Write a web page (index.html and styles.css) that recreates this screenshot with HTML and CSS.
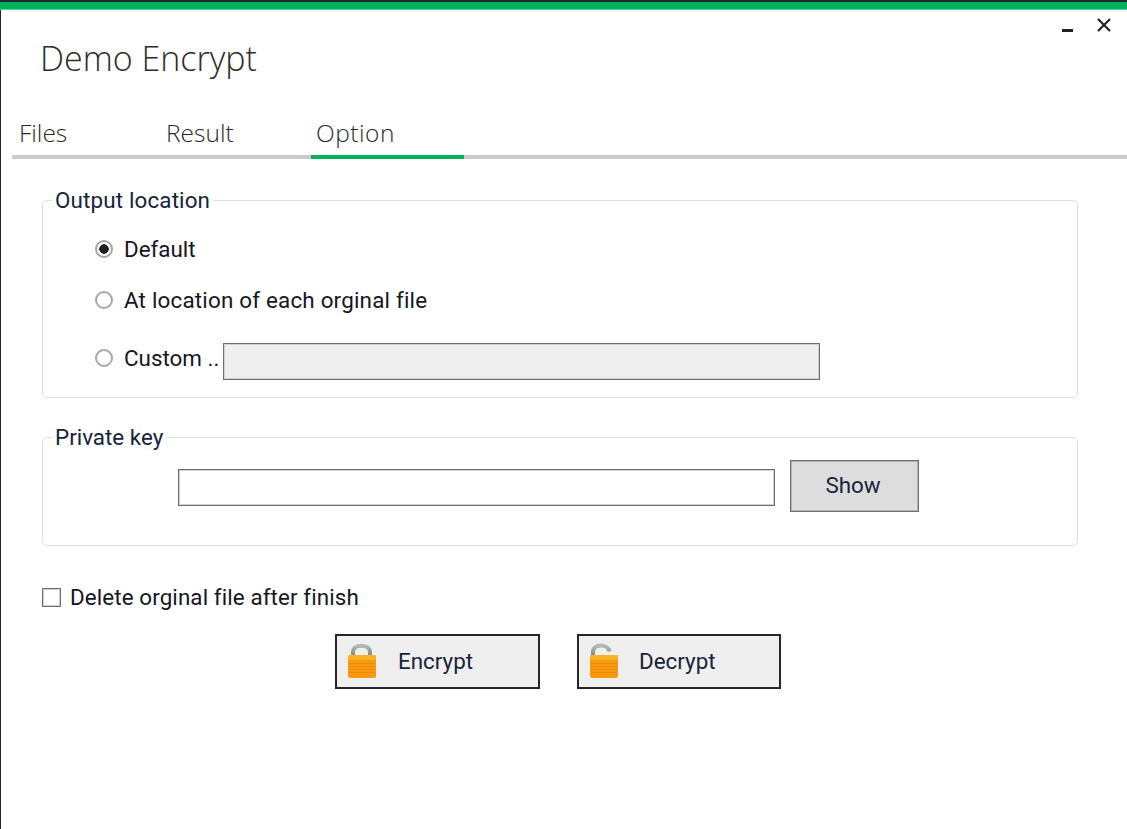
FILE: index.html
```html
<!DOCTYPE html>
<html lang="en">
<head>
<meta charset="utf-8">
<title>Demo Encrypt</title>
<link rel="stylesheet" href="styles.css">
</head>
<body>
<div class="window">
  <div class="topbar"></div>
  <div class="winctrl">
    <svg class="ctl-min" width="12" height="4" viewBox="0 0 12 4"><rect y="0" width="11" height="3" fill="#222"/></svg>
    <svg class="ctl-close" width="16" height="16" viewBox="0 0 16 16"><path d="M2 2 L14 14 M14 2 L2 14" stroke="#222" stroke-width="2.2" fill="none"/></svg>
  </div>
  <h1 class="title">Demo Encrypt</h1>
  <nav class="tabs">
    <span class="tab tab-files">Files</span>
    <span class="tab tab-result">Result</span>
    <span class="tab tab-option active">Option</span>
  </nav>
  <main class="content">
    <fieldset class="group group-output">
      <legend>Output location</legend>
      <div class="group-body body-output">
        <div class="row"><span class="radio checked"></span><span class="label">Default</span></div>
        <div class="row row-second"><span class="radio"></span><span class="label label-wide">At location of each orginal file</span></div>
        <div class="row row-custom"><span class="radio"></span><span class="label label-custom">Custom ..</span><input class="field field-disabled" type="text" disabled></div>
      </div>
    </fieldset>
    <fieldset class="group group-key">
      <legend>Private key</legend>
      <div class="group-body body-key">
        <div class="keyrow"><input class="field field-key" type="text"><button class="show" type="button">Show</button></div>
      </div>
    </fieldset>
    <div class="check-row"><span class="checkbox"></span><span class="label label-delete">Delete orginal file after finish</span></div>
    <div class="actions">
      <button class="action" type="button">
        <svg class="lock" width="34" height="38" viewBox="0 0 34 38">
          <defs><linearGradient id="sh1" x1="0" y1="0" x2="0" y2="1"><stop offset="0" stop-color="#b4b9b6"/><stop offset="1" stop-color="#7d8786"/></linearGradient></defs>
          <path d="M8 14 V10 C8 1.5 25 1.5 25 10 V14" fill="none" stroke="url(#sh1)" stroke-width="4"/>
          <rect x="3" y="13" width="28" height="23" rx="2" fill="#f79a0c"/>
          <rect x="3" y="13" width="28" height="5" rx="1.5" fill="#fbb321"/>
          <path d="M4 21.5 H30 M4 24.5 H30 M4 27.5 H30 M4 30.5 H30" stroke="#ec8a14" stroke-width="1.2"/>
        </svg>
        <span>Encrypt</span>
      </button>
      <button class="action action-decrypt" type="button">
        <svg class="lock" width="34" height="38" viewBox="0 0 34 38">
          <defs><linearGradient id="sh2" x1="0" y1="0" x2="0" y2="1"><stop offset="0" stop-color="#b4b9b6"/><stop offset="1" stop-color="#7d8786"/></linearGradient></defs>
          <path d="M6 14 V10 C6 1.5 21 1.5 22.500 9.500" fill="none" stroke="url(#sh2)" stroke-width="4"/>
          <rect x="3" y="13" width="28" height="23" rx="2" fill="#f79a0c"/>
          <rect x="3" y="13" width="28" height="5" rx="1.5" fill="#fbb321"/>
          <path d="M4 21.5 H30 M4 24.5 H30 M4 27.5 H30 M4 30.5 H30" stroke="#ec8a14" stroke-width="1.2"/>
        </svg>
        <span>Decrypt</span>
      </button>
    </div>
  </main>
</div>
</body>
</html>
```
FILE: styles.css
```css
* { box-sizing: border-box; }
html, body { margin: 0; height: 100%; background: #fff; }
body { overflow: hidden; font-family: Roboto, "Liberation Sans", sans-serif; color: #1f1f1f; }
.window { position: relative; height: 829px; border-left: 1px solid #1c2430; background: #fff; }
.topbar { height: 10px; border-top: 2px solid #24282b; background: #00b15c; border-bottom: 1px solid #4fd08f; margin-left: -1px; }
.winctrl { position: absolute; top: 0; left: 0; right: 0; }
.ctl-min { position: absolute; left: 1061px; top: 29px; }
.ctl-close { position: absolute; left: 1095px; top: 17px; }
.title { margin: 26px 0 0 39px; height: 44px; font: 300 34px/44px "Open Sans", sans-serif; color: #2c2c2c; }
.tabs { display: flex; margin: 39px 0 0 11px; height: 40px; border-bottom: 4px solid #cbcbcb; }
.tab { display: block; height: 40px; font: 300 24.5px/28px "Open Sans", sans-serif; color: #2a2a2a; padding-left: 5px; }
.tab-files { width: 149px; padding-left: 7px; }
.tab-result { width: 150px; }
.tab-option { width: 153px; border-bottom: 4px solid #00b15c; letter-spacing: .5px; }
.content { padding: 0 0 0 41px; margin-top: 29px; }
.group { margin: 0; padding: 0; width: 1036px; border: 1px solid #d9e1e9; border-radius: 5px; min-width: 0; }
.group legend { margin-left: 9px; padding: 0 3px; font-size: 22.4px; line-height: 24px; height: 24px; color: #16233a; }
.group-output { height: 210px; }
.group-output legend { letter-spacing: .15px; }
.group-key { height: 121px; margin-top: 27px; }
.body-output { padding: 25px 0 0 52px; }
.body-key { padding: 11px 0 0 135px; }
.row { display: flex; align-items: center; height: 24px; }
.row-second { margin-top: 27px; }
.row-custom { margin-top: 31px; height: 37px; align-items: flex-start; }
.row-custom .radio { margin-top: 6px; }
.label { font-size: 22.4px; line-height: 24px; color: #16161f; white-space: nowrap; }
.label-wide { letter-spacing: .2px; }
.label-delete { letter-spacing: .1px; }
.label-custom { margin-top: 3px; width: 99px; }
.radio { flex: none; display: block; width: 18px; height: 18px; margin-right: 11px; border: 2px solid #a6a6a6; border-radius: 50%; background: #fff; }
.radio.checked { background: radial-gradient(circle, #222 0 4.5px, #fff 5px); }
.field { display: block; width: 597px; height: 37px; border: 1px solid #6e6e6e; box-shadow: inset 0 0 0 1px #d0d0d0; background: #fff; padding: 0; margin: 0; border-radius: 0; }
.field-disabled { background: #efefef; }
.keyrow { display: flex; align-items: flex-start; }
.field-key { margin-top: 9px; }
.show { width: 129px; height: 52px; margin-left: 15px; background: #dddddd; border: 1px solid #6e6e6e; box-shadow: inset 0 0 0 1px #b4b4b4; font: 22.4px Roboto, sans-serif; color: #16233a; padding: 0 3px 3px 0; border-radius: 0; }
.check-row { display: flex; align-items: center; height: 24px; margin-top: 39px; }
.checkbox { display: block; flex: none; width: 19px; height: 19px; margin-right: 9px; border: 1px solid #6e6e6e; box-shadow: inset 0 0 0 1px #d0d0d0; background: #fff; }
.actions { display: flex; gap: 37px; margin: 25px 0 0 293px; }
.action { position: relative; display: flex; align-items: center; width: 205px; height: 55px; background: #efefef; border: 2px solid #262626; font: 22.4px Roboto, sans-serif; color: #16233a; padding: 0 0 1px 61px; border-radius: 0; }
.action-decrypt { width: 204px; padding-left: 60px; }
.lock { position: absolute; left: 8px; top: 6px; }
```
